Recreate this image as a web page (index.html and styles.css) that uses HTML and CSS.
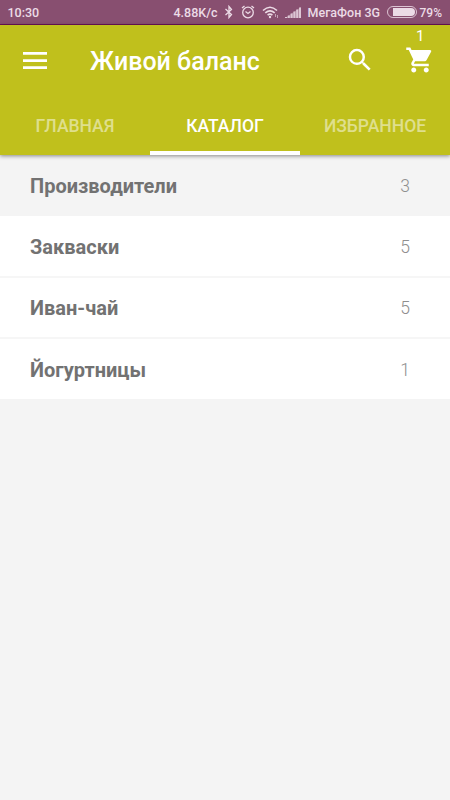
FILE: index.html
```html
<!DOCTYPE html>
<html lang="ru">
<head>
<meta charset="utf-8">
<title>Живой баланс</title>
<link rel="stylesheet" href="styles.css">
</head>
<body>
<div class="status">
  <span class="time">10:30</span>
  <span class="speed">4.88K/c</span>
  <svg class="bluetooth" width="10" height="14" viewBox="0 0 10 14"><path d="M1.500 4l6 5.500L5 12.500v-11L7.500 4.500l-6 5.500"/></svg>
  <svg class="alarm" width="14" height="14" viewBox="0 0 14 14"><circle cx="7" cy="7.500" r="5.300"/><path d="M4.500 6.500L7 8.500l2.500-2M1 3L3.500 1M13 3l-2.500-2"/></svg>
  <svg class="wifi" width="18" height="14" viewBox="0 0 18 14"><path d="M1 5.500q7-6.500 14 0M3.300 7.900q4.700-4 9.400 0M5.600 10.200q2.400-2 4.800 0"/><circle cx="8" cy="12" r="1.200"/><path class="thin" d="M13.500 9v3M15.500 10v3"/></svg>
  <svg class="signal" width="16" height="12" viewBox="0 0 16 12"><path class="wedge" d="M0 12L16 1v11z"/><path d="M0 12v-1h2v1zM2.800 12V9.500h2V12zM5.600 12V7.500h2V12zM8.400 12V5.500h2V12zM11.200 12V3.500h2V12zM14 12V1.500h2V12z"/></svg>
  <span class="carrier">МегаФон 3G</span>
  <span class="battery"><span class="charge"></span></span>
  <span class="percent">79%</span>
</div>
<header class="header">
  <div class="toolbar">
    <svg class="menu" width="24" height="17" viewBox="0 0 24 17"><path d="M0 0h24v2.700H0zM0 7.200h24v2.700H0zM0 14.300h24V17H0z"/></svg>
    <h1 class="title">Живой баланс</h1>
    <svg class="search" width="30" height="30" viewBox="0 0 24 24"><path d="M15.500 14h-.79l-.28-.27A6.471 6.471 0 0 0 16 9.500 6.500 6.500 0 1 0 9.500 16c1.610 0 3.090-.59 4.230-1.570l.27.28v.79l5 4.990L20.490 19l-4.990-5zm-6 0C7.010 14 5 11.990 5 9.500S7.010 5 9.500 5 14 7.010 14 9.500 11.990 14 9.500 14z"/></svg>
    <div class="cart">
      <span class="count">1</span>
      <svg width="30" height="30" viewBox="0 0 24 24"><path d="M7 18c-1.100 0-1.990.9-1.990 2S5.900 22 7 22s2-.9 2-2-.9-2-2-2zM1 2v2h2l3.600 7.590-1.350 2.450c-.16.28-.25.61-.25.960 0 1.100.9 2 2 2h12v-2H7.420c-.14 0-.25-.11-.25-.25l.03-.12.900-1.630h7.450c.75 0 1.410-.41 1.750-1.030l3.580-6.490A1.003 1.003 0 0 0 20 4H5.210l-.94-2H1zm16 16c-1.100 0-1.990.9-1.990 2s.89 2 1.990 2 2-.9 2-2-.9-2-2-2z"/></svg>
    </div>
  </div>
  <nav class="tabs">
    <span class="tab">ГЛАВНАЯ</span>
    <span class="tab active">КАТАЛОГ</span>
    <span class="tab">ИЗБРАННОЕ</span>
  </nav>
</header>
<main class="list">
  <div class="row group"><span class="name">Производители</span><span class="num">3</span></div>
  <div class="row"><span class="name">Закваски</span><span class="num">5</span></div>
  <div class="row"><span class="name">Иван-чай</span><span class="num">5</span></div>
  <div class="row"><span class="name">Йогуртницы</span><span class="num">1</span></div>
</main>
</body>
</html>
```
FILE: styles.css
```css
* { box-sizing: border-box; }
body {
  margin: 0;
  height: 800px;
  overflow: hidden;
  background: #f4f4f4;
  font-family: Roboto, "Liberation Sans", sans-serif;
}
svg { display: block; flex: none; }
.status {
  display: flex;
  align-items: center;
  height: 25px;
  padding: 0 0 0 7.500px;
  background: #884f70;
  border-bottom: 1px solid #6b1257;
  color: #ecdbe6;
  fill: #ecdbe6;
  font-size: 12.5px;
  font-weight: 500;
  white-space: nowrap;
}
.time { width: 166px; padding-top: 1px; }
.speed { width: 50.5px; padding-top: 1px; }
.bluetooth, .alarm, .wifi path { fill: none; stroke: #ecdbe6; stroke-width: 1.3; }
.alarm { margin-left: 6.500px; }
.wifi { margin-left: 7px; }
.wifi path { stroke-width: 1.6; }
.wifi .thin { stroke-width: 1; opacity: .6; }
.signal { margin-left: 5px; opacity: .85; }
.wedge { opacity: .4; }
.carrier { width: 79px; margin-left: 7px; padding-top: 1px; }
.battery {
  display: flex;
  justify-content: flex-end;
  width: 30px;
  height: 12px;
  padding: 1px;
  border: 1px solid #dcc3d3;
  border-radius: 6px;
}
.charge { width: 22px; background: #ecdbe6; border-radius: 0 4px 4px 0; }
.percent { margin-left: 3px; padding-top: 1px; font-size: 12px; }
.header {
  position: relative;
  height: 130px;
  background: #c0c01c;
  color: #fff;
  fill: #fff;
  box-shadow: 0 1px 4px rgba(0, 0, 0, .45);
}
.toolbar { display: flex; align-items: center; height: 70px; padding-left: 23px; }
.title { width: 254px; margin: 3px 0 0 43px; font-size: 25px; line-height: 30px; font-weight: 500; }
.search { margin-left: 1px; }
.cart { position: relative; margin-left: 30px; }
.count { position: absolute; top: -18px; left: 11px; font-size: 15px; line-height: 18px; }
.tabs { display: grid; grid-template-columns: repeat(3, 1fr); height: 60px; }
.tab {
  display: flex;
  align-items: center;
  justify-content: center;
  padding-top: 5px;
  border-bottom: 4px solid transparent;
  color: rgba(255, 255, 255, .5);
  font-size: 17.5px;
  font-weight: 500;
}
.active { border-bottom-color: #fff; color: #fff; }
.row {
  display: flex;
  align-items: center;
  justify-content: space-between;
  height: 61.5px;
  padding: 2px 40px 0 30px;
  background: #fff;
  border-bottom: 2px solid #f6f6f6;
}
.row:last-child { border-bottom-color: #f4f4f4; }
.group { height: 61px; padding-top: 0; background: #f4f4f4; border-bottom: 0; }
.name { color: #727272; font-size: 20px; font-weight: 700; }
.num { color: #8f8f8f; font-size: 17.5px; font-weight: 300; }
```
